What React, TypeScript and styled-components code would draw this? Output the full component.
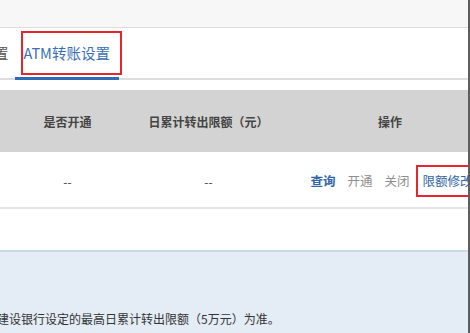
import React from 'react';
import styled, { createGlobalStyle } from 'styled-components';

const GlobalStyle = createGlobalStyle`
    html, body {
        margin: 0;
        padding: 0;
        background: #ffffff;
    }
    body {
        font-family: "Noto Sans CJK SC", "Liberation Sans", sans-serif;
        overflow: hidden;
    }
`;

interface IColumn {
    title: string;
    width: number;
}

const columns: IColumn[] = [
    { title: '是否开通', width: 135 },
    { title: '日累计转出限额（元）', width: 147 },
    { title: '操作', width: 216 },
];

type ActionTone = 'link' | 'muted';

interface IAction {
    label: string;
    tone: ActionTone;
    marked?: boolean;
}

const actions: IAction[] = [
    { label: '查询', tone: 'link' },
    { label: '开通', tone: 'muted' },
    { label: '关闭', tone: 'muted' },
    { label: '限额修改', tone: 'link', marked: true },
];

export default function App() {
    return (
        <Page>
            <GlobalStyle />
            <Frame>
                <TopBand />

                {/* Tabs */}
                <TabBar>
                    <Tab $clipped>置</Tab>
                    <ActiveTab>
                        ATM转账设置
                        <Marker />
                    </ActiveTab>
                </TabBar>

                {/* Table */}
                <Table>
                    <HeadRow>
                        {columns.map(c => (
                            <HeadCell key={c.title} $width={c.width}>{c.title}</HeadCell>
                        ))}
                    </HeadRow>
                    <BodyRow>
                        <Cell $width={columns[0].width}>--</Cell>
                        <Cell $width={columns[1].width}>--</Cell>
                        <Cell $width={columns[2].width}>
                            <Actions>
                                {actions.map(a => (
                                    <Action key={a.label} $tone={a.tone} $marked={a.marked}>
                                        {a.label}
                                    </Action>
                                ))}
                            </Actions>
                        </Cell>
                    </BodyRow>
                </Table>

                {/* Notice */}
                <Notice>
                    <NoticeText>建设银行设定的最高日累计转出限额（5万元）为准。</NoticeText>
                </Notice>
            </Frame>
        </Page>
    );
}

const Page = styled.div`
    width: 470px;
    height: 333px;
    overflow: hidden;
    background: #ffffff;
`;

const Frame = styled.div`
    width: 468px;
    height: 333px;
    border-right: 2px solid #5e5e5e;
    display: flex;
    flex-direction: column;
    overflow: hidden;
`;

const TopBand = styled.div`
    height: 27px;
    flex-shrink: 0;
    background: #f7f7f7;
    border-bottom: 1px solid #dcdcdc;
`;

const TabBar = styled.div`
    height: 50px;
    flex-shrink: 0;
    display: flex;
    align-items: stretch;
    border-bottom: 2px solid #dedede;
    margin-bottom: 10px;
`;

const Tab = styled.div<{ $clipped?: boolean }>`
    display: flex;
    align-items: center;
    padding-bottom: 1px;
    margin-left: ${p => (p.$clipped ? '-6px' : '0')};
    font-size: 14.5px;
    color: #555555;
`;

const ActiveTab = styled.div`
    position: relative;
    width: 104px;
    margin-left: 6px;
    margin-bottom: -2px;
    padding-left: 9px;
    box-sizing: border-box;
    display: flex;
    align-items: center;
    border-bottom: 3px solid #2d6cb4;
    font-size: 14.5px;
    color: #3a6fb4;
    white-space: nowrap;
`;

const Marker = styled.span`
    position: absolute;
    left: 6px;
    top: 3px;
    width: 101px;
    height: 44px;
    box-sizing: border-box;
    border: 2px solid #e8242c;
    pointer-events: none;
`;

const Table = styled.div`
    width: 498px;
    flex-shrink: 0;
`;

const HeadRow = styled.div`
    height: 62px;
    display: flex;
    background: #d3d3d3;
`;

const HeadCell = styled.div<{ $width: number }>`
    width: ${p => p.$width}px;
    flex-shrink: 0;
    display: flex;
    align-items: center;
    justify-content: center;
    font-size: 12px;
    font-weight: 700;
    color: #444444;
    white-space: nowrap;
`;

const BodyRow = styled.div`
    height: 55px;
    display: flex;
    border-bottom: 2px solid #e6e6e6;
`;

const Cell = styled.div<{ $width: number }>`
    width: ${p => p.$width}px;
    flex-shrink: 0;
    display: flex;
    align-items: center;
    justify-content: center;
    padding-top: 3px;
    box-sizing: border-box;
    font-size: 12px;
    color: #444444;
    white-space: nowrap;
`;

const Actions = styled.div`
    display: flex;
    align-items: center;
    margin-left: 4px;
    margin-top: -1px;
`;

const Action = styled.span<{ $tone: ActionTone; $marked?: boolean }>`
    font-size: 12.5px;
    line-height: 18px;
    margin: 0 ${p => (p.$marked ? '0' : '6px')};
    padding: ${p => (p.$marked ? '5px 5px' : '0')};
    border: ${p => (p.$marked ? '2px solid #e8242c' : 'none')};
    color: ${p => (p.$tone === 'link' ? '#2f63a6' : '#8e8e8e')};
    font-weight: ${p => (p.$tone === 'link' && !p.$marked ? 600 : 400)};
    white-space: nowrap;
`;

const Notice = styled.div`
    flex: 1;
    margin-top: 41px;
    background: #e4ecf5;
    border-top: 2px solid #cbd8e6;
    padding-top: 58px;
`;

const NoticeText = styled.div`
    margin-left: -3px;
    font-size: 12px;
    color: #333333;
    white-space: nowrap;
`;
